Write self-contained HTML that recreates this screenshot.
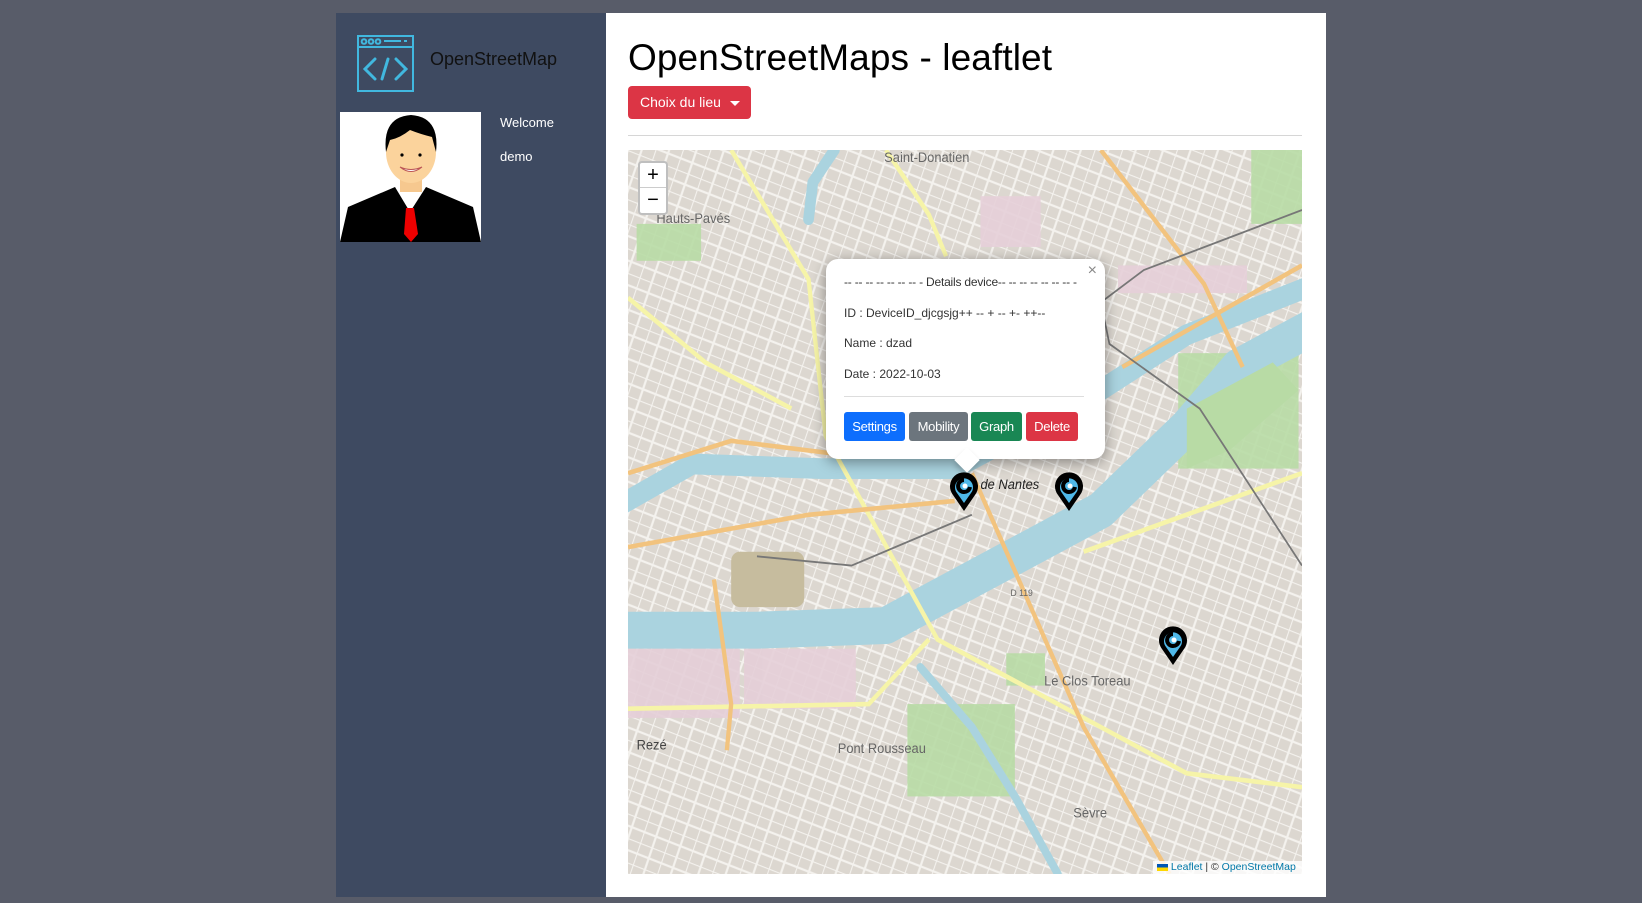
<!DOCTYPE html>
<html><head><meta charset="utf-8"><style>
*{box-sizing:border-box;margin:0;padding:0}
body{width:1642px;height:903px;background:#585c69;font-family:"Liberation Sans",Arial,sans-serif;position:relative;overflow:hidden}
#side{position:absolute;left:336px;top:13px;width:270px;height:884px;background:#3e4a61}
#main{position:absolute;left:606px;top:13px;width:720px;height:884px;background:#fff}
.abs{position:absolute}
.btn{position:absolute;top:412px;height:29px;color:#fff;font-size:13px;line-height:29px;text-align:center;border-radius:3px;letter-spacing:-0.3px}
</style></head><body>
<div id="side">
 <svg class="abs" style="left:21px;top:22px" width="57" height="57" viewBox="0 0 57 57" fill="none" stroke="#41b8df" stroke-width="2">
  <rect x="1" y="1" width="55" height="55"/><line x1="1" y1="12" x2="56" y2="12"/>
  <circle cx="7" cy="6.5" r="2.3"/><circle cx="14" cy="6.5" r="2.3"/><circle cx="21" cy="6.5" r="2.3"/>
  <line x1="27" y1="6" x2="44" y2="6"/><line x1="47" y1="6" x2="50" y2="6"/>
  <path d="M18 24 L8 34 L18 44 M39 24 L49 34 L39 44 M31 24 L25 44" stroke-width="3" stroke-linecap="round"/>
 </svg>
 <div class="abs" style="left:94px;top:36px;font-size:18px;color:#111">OpenStreetMap</div>
 <svg class="abs" style="left:4px;top:99px" width="141" height="130" viewBox="0 0 141 130">
  <rect width="141" height="130" fill="#fff"/>
  <path d="M0 130 L8 95 L55 75 L86 75 L133 95 L141 130 Z" fill="#000"/>
  <path d="M55 75 L70 100 L86 75 Z" fill="#fff"/>
  <path d="M66 96 L74 96 L78 122 L71 130 L64 122 Z" fill="#e00"/>
  <rect x="60" y="58" width="22" height="22" fill="#f6c88f"/>
  <ellipse cx="71" cy="40" rx="25" ry="31" fill="#fbd39c"/>
  <path d="M46 40 Q42 5 71 3 Q100 5 96 40 L92 25 Q80 22 70 18 Q60 26 50 28 Z" fill="#000"/>
  <path d="M60 55 Q71 64 82 55 Q71 60 60 55Z" fill="#fff" stroke="#b55" stroke-width="1"/>
  <circle cx="62" cy="43" r="1.6"/><circle cx="80" cy="43" r="1.6"/>
 </svg>
 <div class="abs" style="left:164px;top:102px;font-size:13px;color:#fff">Welcome</div>
 <div class="abs" style="left:164px;top:136px;font-size:13px;color:#fff">demo</div>
</div>
<div id="main">
 <div class="abs" style="left:22px;top:24px;font-size:37px;color:#000;letter-spacing:0.1px">OpenStreetMaps - leaftlet</div>
 <div class="abs" style="left:22px;top:73px;width:123px;height:33px;background:#dc3545;border-radius:4px;color:#fff;font-size:14px;line-height:33px;padding-left:12px">Choix du lieu <span style="display:inline-block;width:0;height:0;border-left:5px solid transparent;border-right:5px solid transparent;border-top:5px solid #fff;vertical-align:middle;margin-left:5px"></span></div>
 <div class="abs" style="left:22px;top:122px;width:674px;height:1px;background:#d6d6d6"></div>
</div>
<svg class="abs" style="left:628px;top:150px" width="674" height="724" viewBox="0 0 1568 1568" preserveAspectRatio="none">
 <defs><pattern id="st" width="60" height="50" patternUnits="userSpaceOnUse" patternTransform="rotate(20)">
  <rect width="60" height="50" fill="#dcd7d0"/><path d="M0 0H60M0 25H60M0 0V50M30 0V50" stroke="#f4f2ee" stroke-width="5"/></pattern></defs>
 <rect width="1568" height="1568" fill="url(#st)"/>
 <g fill="#b8dba5" opacity=".9"><rect x="20" y="160" width="150" height="80"/><rect x="650" y="1200" width="250" height="200"/><rect x="1280" y="440" width="280" height="250"/><rect x="1450" y="0" width="118" height="160"/><rect x="880" y="1090" width="90" height="70"/></g>
 <g fill="#e5cfd8" opacity=".9"><rect x="0" y="1080" width="260" height="150"/><rect x="270" y="1080" width="260" height="130"/><rect x="820" y="100" width="140" height="110"/><rect x="1140" y="250" width="300" height="60"/></g>
 <rect x="240" y="870" width="170" height="120" rx="20" fill="#c6bc9e"/>
 <g fill="none" stroke="#aad3df" stroke-linecap="round" stroke-linejoin="round">
  <path d="M-20 1040 L300 1040 L600 1030 L800 930 L1100 780 L1300 600 L1420 470 L1600 380" stroke-width="80"/>
  <path d="M-20 770 L150 680 L450 690 L760 690 L1100 520 L1300 400 L1600 290" stroke-width="45"/>
  <path d="M480 0 L430 70 L420 150" stroke-width="25"/>
  <path d="M680 1120 L800 1250 L900 1400 L1000 1568" stroke-width="18"/>
 </g>
 <path d="M1300 560 L1500 460 L1560 520 L1400 650 L1300 690 Z" fill="#b8dba5"/>
 <g fill="none" stroke="#f6f4a8" stroke-width="10">
  <path d="M240 0 L420 280 L460 620 L720 1060 L1300 1350 L1568 1380"/><path d="M0 320 L180 460 L380 560"/><path d="M700 1060 L560 1200 L0 1210"/><path d="M1060 870 L1568 700"/><path d="M600 0 L700 140 L740 230"/>
 </g>
 <g fill="none" stroke="#f2c37e" stroke-width="10">
  <path d="M800 700 L1060 1250 L1260 1568"/><path d="M0 700 L240 630 L500 660 L770 660"/><path d="M0 860 L420 790 L760 760"/><path d="M1100 0 L1340 290 L1430 470"/><path d="M200 930 L240 1200 L230 1300"/><path d="M1150 470 L1568 250"/>
 </g>
 <g fill="none" stroke="#777" stroke-width="4"><path d="M1568 130 L1200 260 L1100 330 L1120 420 L1330 560 L1568 900"/><path d="M300 880 L520 900 L800 790"/></g>
 <g font-family="Liberation Sans,sans-serif" font-size="30" fill="#666"><text x="596" y="26">Saint-Donatien</text><text x="66" y="158">Hauts-Pavés</text><text x="968" y="1160">Le Clos Toreau</text><text x="488" y="1306">Pont Rousseau</text><text x="20" y="1298" fill="#444">Rezé</text><text x="1036" y="1446">Sèvre</text><text x="820" y="734" fill="#222" font-style="italic">de Nantes</text><text x="890" y="966" font-size="20">D 119</text></g>
</svg>
<div class="abs" style="left:638px;top:161px;width:30px;height:54px;background:#fff;border:2px solid rgba(0,0,0,.25);border-radius:4px;font-size:20px;text-align:center;line-height:24px;color:#000"><div style="border-bottom:1px solid #ccc;height:25px">+</div><div>−</div></div>
<div class="abs" style="left:826px;top:259px;width:279px;height:200px;background:#fff;border-radius:12px;box-shadow:0 3px 14px rgba(0,0,0,.4);font-size:12px;color:#333">
 <div class="abs" style="right:8px;top:3px;color:#888;font-size:16px">×</div>
 <div class="abs" style="left:18px;top:16px;white-space:nowrap;letter-spacing:-0.2px">-- -- -- -- -- -- -- - Details device-- -- -- -- -- -- -- -</div>
 <div class="abs" style="left:18px;top:47px;white-space:nowrap">ID : DeviceID_djcgsjg++ -- + -- +- ++--</div>
 <div class="abs" style="left:18px;top:77px">Name : dzad</div>
 <div class="abs" style="left:18px;top:108px">Date : 2022-10-03</div>
 <div class="abs" style="left:18px;top:137px;width:240px;height:1px;background:#ddd"></div>
</div>
<div class="abs" style="left:958px;top:451px;width:18px;height:18px;background:#fff;transform:rotate(45deg);box-shadow:3px 3px 6px rgba(0,0,0,.2)"></div>
<div class="btn" style="left:844px;width:61px;background:#0d6efd">Settings</div>
<div class="btn" style="left:909px;width:59px;background:#6c757d">Mobility</div>
<div class="btn" style="left:971px;width:51px;background:#198754">Graph</div>
<div class="btn" style="left:1026px;width:52px;background:#dc3545">Delete</div>
<svg width="0" height="0" style="position:absolute"><defs><g id="mk"><path d="M15 41 L4 25 A14 14 0 1 1 26 25 Z" fill="#000"/><path d="M15 33 L8 23 A9 9 0 1 1 22 23 Z" fill="#4fb8e8"/><path d="M15 10 A6 6 0 1 0 21 17" stroke="#000" stroke-width="4" fill="none"/><circle cx="16" cy="16" r="2.5" fill="#fff"/></g></defs></svg>
<svg class="abs" style="left:949px;top:470px" width="30" height="44"><use href="#mk"/></svg>
<svg class="abs" style="left:1054px;top:470px" width="30" height="44"><use href="#mk"/></svg>
<svg class="abs" style="left:1158px;top:624px" width="30" height="44"><use href="#mk"/></svg>
<div class="abs" style="left:1153px;top:861px;width:149px;height:13px;background:rgba(255,255,255,.8);font-size:10.5px;color:#333;padding-left:4px;line-height:13px"><span style="display:inline-block;width:11px;height:7px;background:linear-gradient(#0057b7 50%,#ffd700 50%);vertical-align:middle"></span> <span style="color:#0078a8">Leaflet</span> | © <span style="color:#0078a8">OpenStreetMap</span></div>
</body></html>
